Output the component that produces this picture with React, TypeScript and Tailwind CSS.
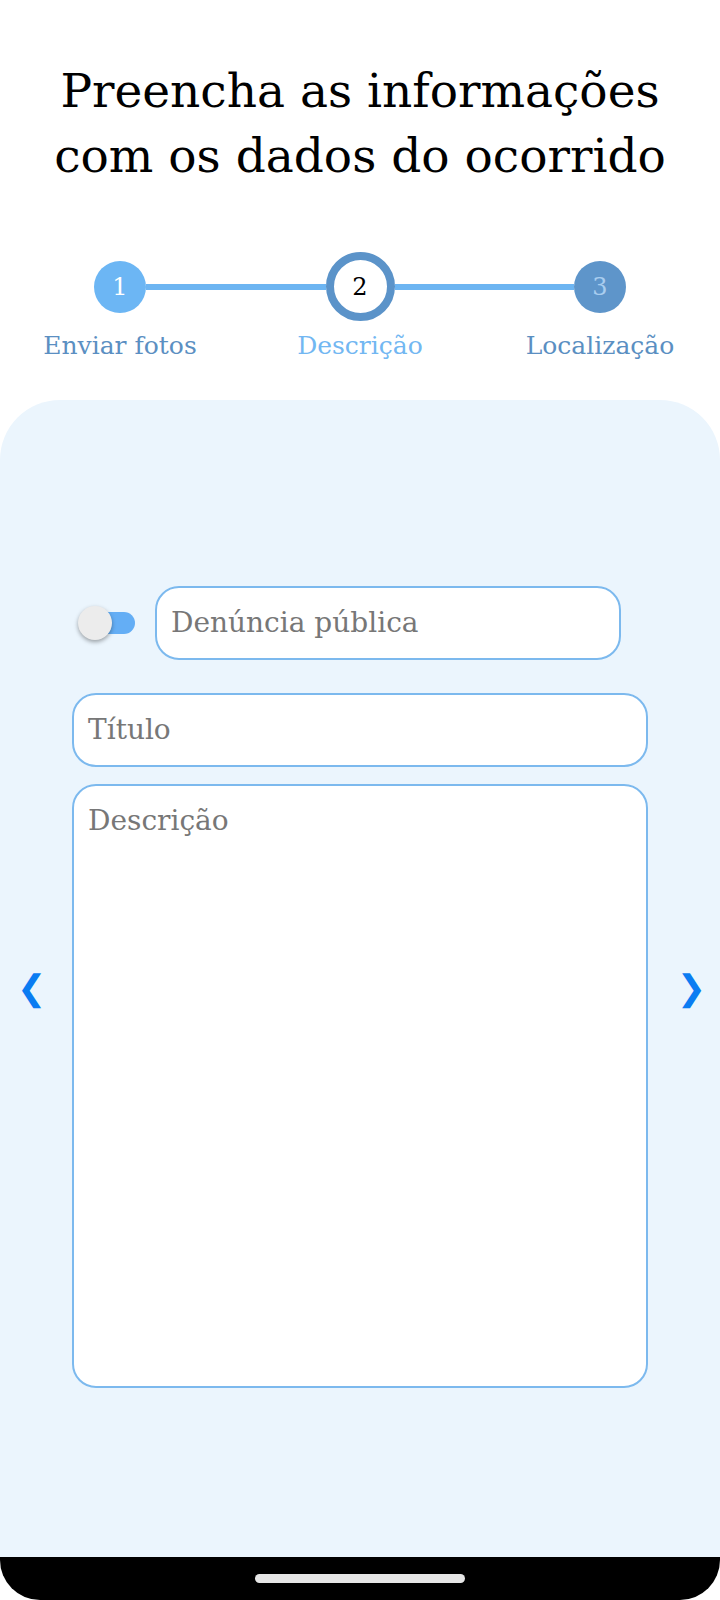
import React from "react";

const slab = { fontFamily: '"DejaVu Serif", "Liberation Serif", serif' };

const steps = [
  { n: "1", label: "Enviar fotos" },
  { n: "2", label: "Descrição" },
  { n: "3", label: "Localização" },
];

const StepCircle = ({ i }: { i: number }) => {
  if (i === 0)
    return (
      <div className="w-[52px] h-[52px] rounded-full bg-[#6cb6f4] flex items-center justify-center text-white text-[24px]">
        1
      </div>
    );
  if (i === 1)
    return (
      <div className="w-[69px] h-[69px] rounded-full border-[8px] border-[#5b93c9] bg-white flex items-center justify-center text-black text-[24px]">
        2
      </div>
    );
  return (
    <div className="w-[52px] h-[52px] rounded-full bg-[#5e95ca] flex items-center justify-center text-[#a9cdef] text-[24px]">
      3
    </div>
  );
};

const App = () => {
  return (
    <div className="w-[720px] h-[1600px] flex flex-col bg-white overflow-hidden" style={slab}>
      <h1 className="pt-[58px] text-center text-[47px] leading-[65px] text-black font-normal">
        Preencha as informações
        <br />
        com os dados do ocorrido
      </h1>

      <div className="mt-[64px] grid grid-cols-3">
        {steps.map((s, i) => (
          <div key={s.n} className="flex flex-col items-center">
            <div className="w-full h-[69px] flex items-center">
              <div className={`flex-1 h-[6px] ${i === 0 ? "bg-transparent" : "bg-[#6db5f2]"}`} />
              <StepCircle i={i} />
              <div className={`flex-1 h-[6px] ${i === 2 ? "bg-transparent" : "bg-[#6db5f2]"}`} />
            </div>
            <span
              className={`mt-[8px] text-[25px] leading-[34px] ${
                i === 1 ? "text-[#72b7f2]" : "text-[#5b8fc2]"
              }`}
            >
              {s.label}
            </span>
          </div>
        ))}
      </div>

      <div className="mt-[37px] flex-1 bg-[#ebf5fd] rounded-t-[60px] flex items-center pt-[16px]">
        <button
          className="w-[72px] flex justify-start pl-[17px] pt-[4px] text-[#0a7cf2] text-[35px]"
          style={{ fontFamily: '"DejaVu Sans", sans-serif' }}
        >
          ❮
        </button>
        <div className="flex-1 flex flex-col">
          <div className="flex items-center pl-[8px] pr-[27px]">
            <div className="relative w-[55px] h-[22px] rounded-full bg-[#64aef5] shrink-0">
              <div className="absolute -left-[2px] -top-[6px] w-[34px] h-[34px] rounded-full bg-[#ececec] shadow-[0_2px_4px_rgba(0,0,0,0.35)]" />
            </div>
            <div className="ml-[20px] flex-1 h-[74px] rounded-[24px] border-2 border-[#7cb9ee] bg-white flex items-center px-[14px] text-[28px] text-[#777777]">
              Denúncia pública
            </div>
          </div>
          <div className="mt-[33px] h-[74px] rounded-[24px] border-2 border-[#7cb9ee] bg-white flex items-center px-[14px] text-[28px] text-[#777777]">
            Título
          </div>
          <div className="mt-[17px] h-[604px] rounded-[24px] border-2 border-[#7cb9ee] bg-white px-[14px] pt-[14px] text-[28px] text-[#777777]">
            Descrição
          </div>
        </div>
        <button
          className="w-[72px] flex justify-end pr-[14px] pt-[4px] text-[#0a7cf2] text-[35px]"
          style={{ fontFamily: '"DejaVu Sans", sans-serif' }}
        >
          ❯
        </button>
      </div>

      <div className="h-[43px] bg-black rounded-b-[40px] flex justify-center pt-[17px]">
        <div className="w-[210px] h-[9px] rounded-full bg-[#e6e6e6]" />
      </div>
    </div>
  );
};

export default App;
